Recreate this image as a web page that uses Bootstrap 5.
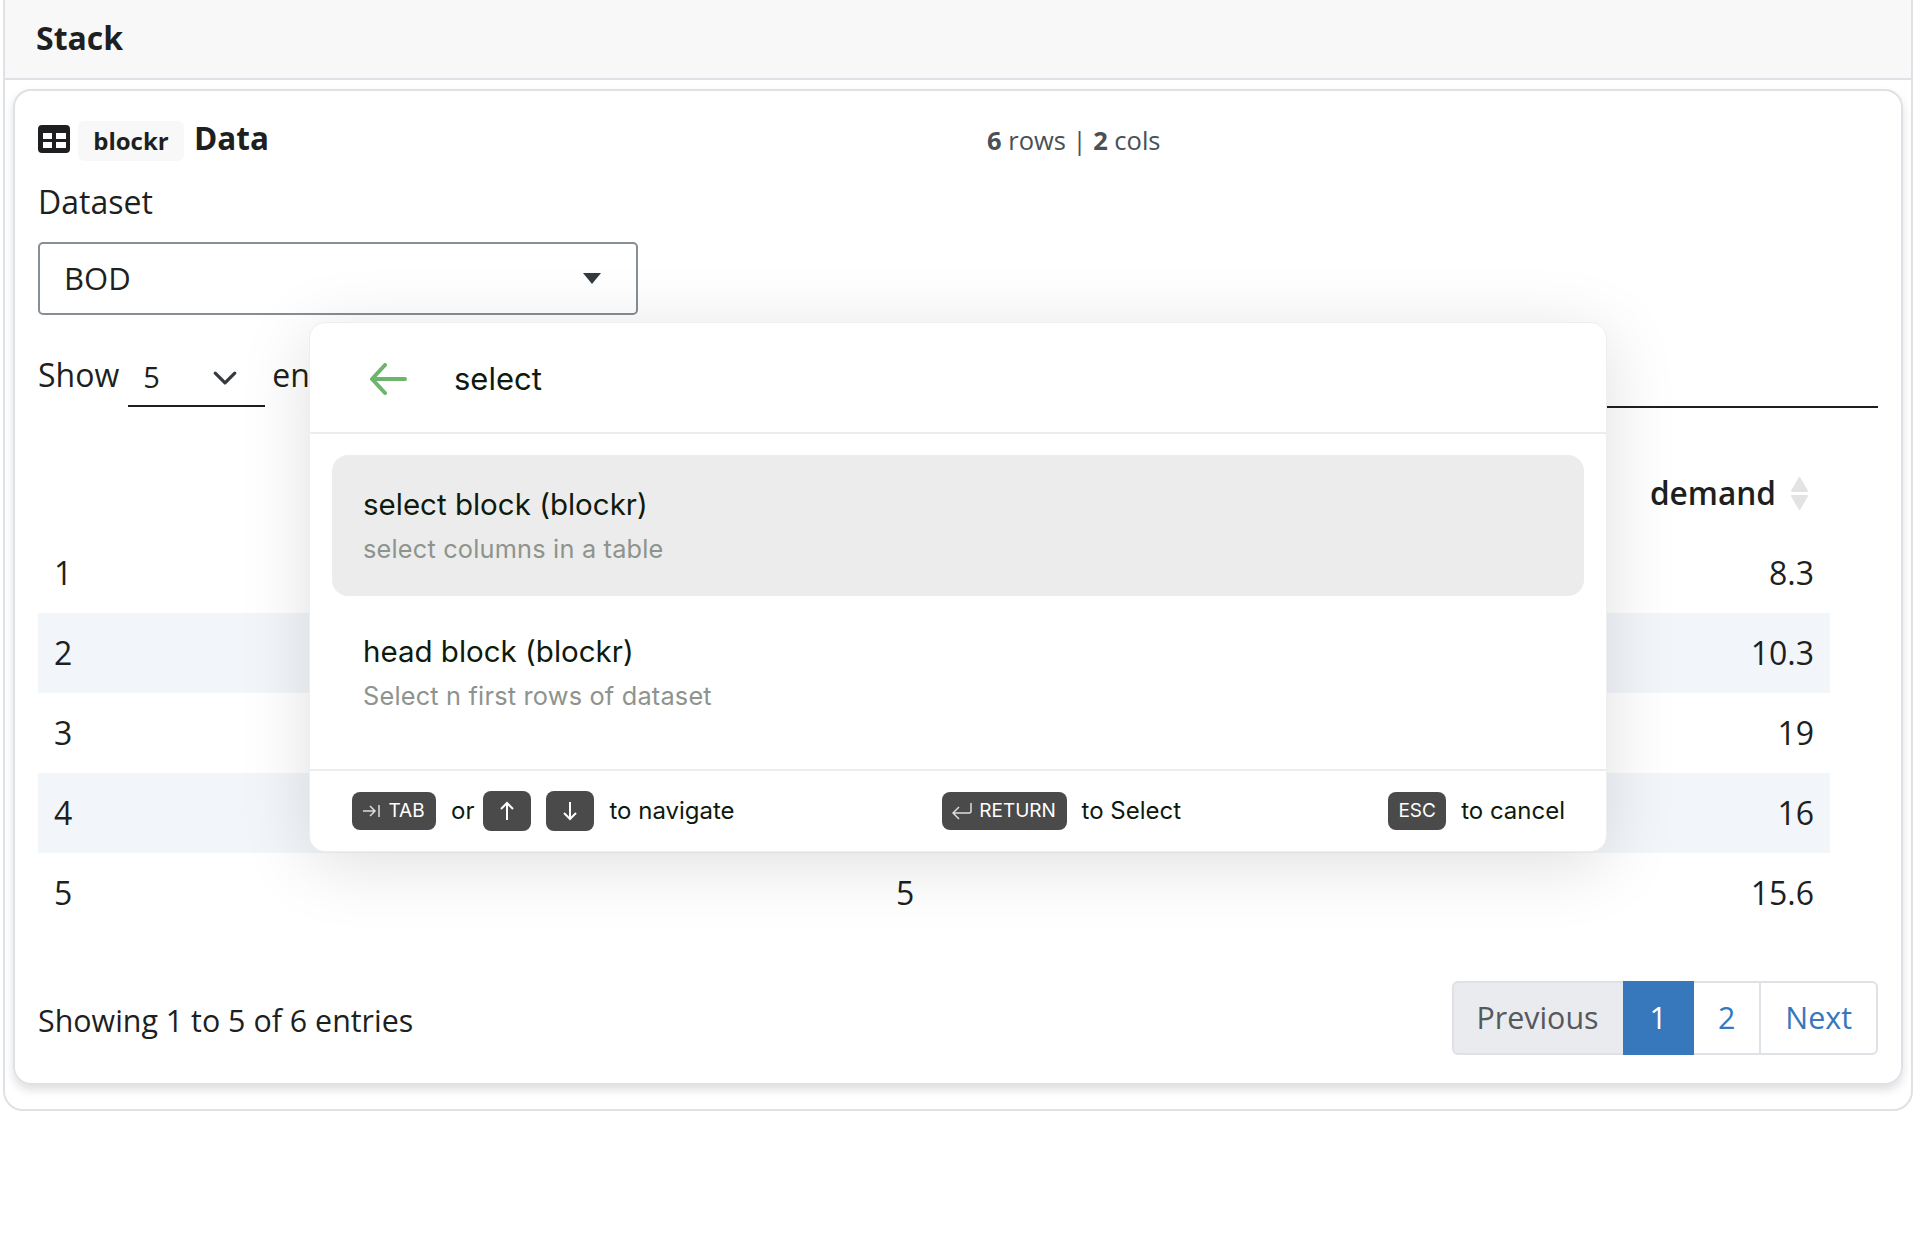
<!DOCTYPE html>
<html lang="en">
<head>
  <meta charset="UTF-8">
  <title>Stack</title>
  <link href="https://cdn.jsdelivr.net/npm/bootstrap@5.3.3/dist/css/bootstrap.min.css" rel="stylesheet">
  <style>
    body { font-family: "Open Sans", sans-serif; font-size: 32px; color: #1d1f21; background: #fff; position: relative; }
    .stack-card { width: 1910px; margin: -20px 0 0 3px; border: 2px solid #dee2e6; border-radius: 20px; padding-bottom: 24px; }
    .stack-head { height: 98px; padding: 18px 31px 0; background: #f8f8f8; border-bottom: 2px solid #dee2e6; font-weight: 700; font-size: 32px; line-height: 75px; }
    .block-card { margin: 9px 8px 0 8px; border: 2px solid #dee2e6; border-radius: 18px; box-shadow: 0 5px 10px rgba(0,0,0,.13); padding: 30px 23px 28px; }
    .title-row { height: 40px; }
    .table-glyph { width: 32px; height: 28px; margin-top: -5px; }
    .pkg-chip { width: 106px; height: 40px; margin: 0 10px 0 8px; background: #f8f8f8; border-radius: 6px; font-weight: 700; font-size: 24px; line-height: 40px; text-align: center; }
    .title-text { font-weight: 700; font-size: 31.5px; line-height: 40px; margin-top: -6px; }
    .dims { position: absolute; left: 982px; top: 138px; font-size: 25.5px; line-height: 40px; color: #495057; }
    .set-label { font-size: 32px; line-height: 48px; margin: 17px 0 16px; }
    .set-picker { width: 600px; height: 73px; border: 2px solid #868e96; border-radius: 5px; padding: 0 35px 0 24px; font-size: 31px; }
    .caret-down { width: 0; height: 0; border: 9px solid transparent; border-top: 11px solid #343a40; border-bottom: 0; }
    .tools-row { height: 69px; margin-top: 23px; }
    .tool-word { line-height: 48px; margin-bottom: 8px; }
    .len-select { width: 137px; height: 56px; margin: 0 7px 0 9px; padding: 0 0 2px 15px; font-size: 29px; color: #1d1f21; border: 0; border-bottom: 2px solid #1d1f21; border-radius: 0; background-size: 26px; background-position: right 27px center; font-family: inherit; }
    .search-line { width: 572px; height: 2px; background: #1d1f21; margin-bottom: -1px; }
    .data-tbl { width: 1792px; margin: 46px 0 0; table-layout: fixed; font-size: 32px; color: #1d1f21; }
    .data-tbl th, .data-tbl td { height: 80px; padding: 0 16px; border: 0; vertical-align: middle; background: transparent; color: inherit; line-height: 48px; }
    .data-tbl th { font-weight: 600; font-size: 31.6px; padding-bottom: 1px; }
    .data-tbl tbody tr:nth-child(even) td { background: #f2f5fa; }
    .col-first { width: 25%; }
    .col-second { width: 24.8%; }
    .sort-glyph { width: 17px; height: 35px; margin: 0 6px 0 15px; vertical-align: -6px; }
    .foot-row { margin-top: 48px; }
    .info-text { font-size: 30.4px; line-height: 48px; padding-top: 6px; }
    .pager { margin: 0; }
    .pager .page-link { height: 74px; line-height: 70px; padding: 0 24px; border: 2px solid #dee2e6; color: #3778bd; font-size: 30.4px; }
    .pager .page-item + .page-item .page-link { margin-left: -2px; }
    .pager .page-item.disabled .page-link { background: #e9ebef; color: #55585c; padding-left: 23px; }
    .pager .page-item.active .page-link { background: #3778bd; border-color: #3778bd; color: #fff; padding: 0 25px; }
    .pager .page-item:first-child .page-link, .pager .page-item:last-child .page-link { border-radius: 6px; }
    .pager .page-item:first-child .page-link { border-top-right-radius: 0; border-bottom-right-radius: 0; }
    .pager .page-item:last-child .page-link { border-top-left-radius: 0; border-bottom-left-radius: 0; }

    .cmd-panel { position: absolute; left: 309px; top: 322px; width: 1298px; height: 530px; background: #fff; border-radius: 16px; border: 1px solid #eeeeee; box-shadow: 0 12px 70px rgba(0,0,0,.13); font-family: Inter, sans-serif; color: #0d1a0d; }
    .cmd-search { height: 111px; padding: 3px 0 0 59px; border-bottom: 2px solid #ececec; font-size: 31px; }
    .cmd-back { width: 38px; height: 32px; margin: 0 47px 0 0; }
    .cmd-list { height: 335px; padding: 21px 22px 0; }
    .cmd-item { height: 141px; padding: 27px 32px 0 31px; border-radius: 16px; margin-bottom: 6px; }
    .cmd-item.is-on { background: #ececec; }
    .cmd-name { font-size: 29.5px; line-height: 44px; }
    .cmd-desc { font-size: 25.3px; line-height: 44px; margin-top: 1px; color: #8e948d; letter-spacing: .2px; }
    .cmd-foot { height: 82px; padding: 0 41px 0 42px; border-top: 2px solid #ececec; font-size: 24px; }
    .key-group { gap: 15px; }
    .keycap { display: inline-flex; align-items: center; justify-content: center; height: 38px; padding: 0; background: #4a4a4a; color: #fff; border-radius: 8px; font-family: Inter, sans-serif; font-size: 19px; }
    .keycap svg { margin-right: 7px; }
    .key-tab { width: 84px; }
    .key-ret { width: 125px; }
    .key-esc { width: 58px; }
    .keycap.is-arrow { width: 48px; height: 40px; }
    .keycap.is-arrow svg { margin: 0; }
    .or-word { margin-right: -6px; }
  </style>
</head>
<body>
  <div class="card stack-card">
    <div class="stack-head">Stack</div>
    <div class="block-card">
      <div class="d-flex align-items-center title-row">
        <svg class="table-glyph" viewBox="0 0 32 28"><path fill="#1d1f21" fill-rule="evenodd" d="M4 0h24a4 4 0 0 1 4 4v20a4 4 0 0 1-4 4H4a4 4 0 0 1-4-4V4a4 4 0 0 1 4-4zM5 8v6h9V8zm13 0v6h10V8zM5 17v6h9v-6zm13 0v6h10v-6z"/></svg>
        <span class="pkg-chip">blockr</span>
        <span class="title-text">Data</span>
      </div>
      <div class="dims"><b>6</b> rows | <b>2</b> cols</div>
      <div class="set-label">Dataset</div>
      <div class="set-picker d-flex align-items-center justify-content-between">
        <span>BOD</span>
        <span class="caret-down"></span>
      </div>
      <div class="tools-row d-flex justify-content-between align-items-end">
        <div class="d-flex align-items-end">
          <span class="tool-word">Show</span>
          <select class="form-select len-select"><option>5</option><option>10</option></select>
          <span class="tool-word">entries</span>
        </div>
        <div class="search-line"></div>
      </div>
      <table class="table data-tbl">
        <colgroup><col class="col-first"><col class="col-second"><col></colgroup>
        <thead>
          <tr><th></th><th class="text-end">Time</th><th class="text-end">demand<svg class="sort-glyph" viewBox="0 0 17 35"><path fill="#e3e3e3" stroke="#e3e3e3" stroke-width="2" stroke-linejoin="round" d="M8.500 2 16 15H1zM1 20h15L8.500 33z"/></svg></th></tr>
        </thead>
        <tbody>
          <tr><td>1</td><td class="text-end">1</td><td class="text-end">8.3</td></tr>
          <tr><td>2</td><td class="text-end">2</td><td class="text-end">10.3</td></tr>
          <tr><td>3</td><td class="text-end">3</td><td class="text-end">19</td></tr>
          <tr><td>4</td><td class="text-end">4</td><td class="text-end">16</td></tr>
          <tr><td>5</td><td class="text-end">5</td><td class="text-end">15.6</td></tr>
        </tbody>
      </table>
      <div class="foot-row d-flex justify-content-between align-items-center">
        <div class="info-text">Showing 1 to 5 of 6 entries</div>
        <ul class="pagination pager">
          <li class="page-item disabled"><a class="page-link" href="#">Previous</a></li>
          <li class="page-item active"><a class="page-link" href="#">1</a></li>
          <li class="page-item"><a class="page-link" href="#">2</a></li>
          <li class="page-item"><a class="page-link" href="#">Next</a></li>
        </ul>
      </div>
    </div>
  </div>

  <div class="cmd-panel">
    <div class="cmd-search d-flex align-items-center">
      <svg class="cmd-back" viewBox="0 0 38 32" fill="none" stroke="#6db56c" stroke-width="4" stroke-linecap="round" stroke-linejoin="round"><path d="M36 16H3M16 2 3 16l13 14"/></svg>
      <span>select</span>
    </div>
    <div class="cmd-list">
      <div class="cmd-item is-on">
        <div class="cmd-name">select block (blockr)</div>
        <div class="cmd-desc">select columns in a table</div>
      </div>
      <div class="cmd-item">
        <div class="cmd-name">head block (blockr)</div>
        <div class="cmd-desc">Select n first rows of dataset</div>
      </div>
    </div>
    <div class="cmd-foot d-flex align-items-center justify-content-between">
      <div class="d-flex align-items-center key-group">
        <kbd class="keycap key-tab"><svg width="18" height="16" viewBox="0 0 18 16" fill="none" stroke="#ddd" stroke-width="1.500"><path d="M0 8h12M7 3l5 5-5 5M16 2v12"/></svg>TAB</kbd>
        <span class="or-word">or</span>
        <kbd class="keycap is-arrow"><svg width="18" height="20" viewBox="0 0 18 20" fill="none" stroke="#fff" stroke-width="2"><path d="M9 19V2M3 8l6-6 6 6"/></svg></kbd>
        <kbd class="keycap is-arrow"><svg width="18" height="20" viewBox="0 0 18 20" fill="none" stroke="#fff" stroke-width="2"><path d="M9 1v17M3 12l6 6 6-6"/></svg></kbd>
        <span>to navigate</span>
      </div>
      <div class="d-flex align-items-center key-group">
        <kbd class="keycap key-ret"><svg width="20" height="20" viewBox="0 0 20 20" fill="none" stroke="#ddd" stroke-width="1.500"><path d="M19 2v8a2 2 0 0 1-2 2H2M7 6l-6 6 6 6"/></svg>RETURN</kbd>
        <span>to Select</span>
      </div>
      <div class="d-flex align-items-center key-group">
        <kbd class="keycap key-esc">ESC</kbd>
        <span>to cancel</span>
      </div>
    </div>
  </div>
  <script src="https://cdn.jsdelivr.net/npm/bootstrap@5.3.3/dist/js/bootstrap.bundle.min.js"></script>
</body>
</html>
